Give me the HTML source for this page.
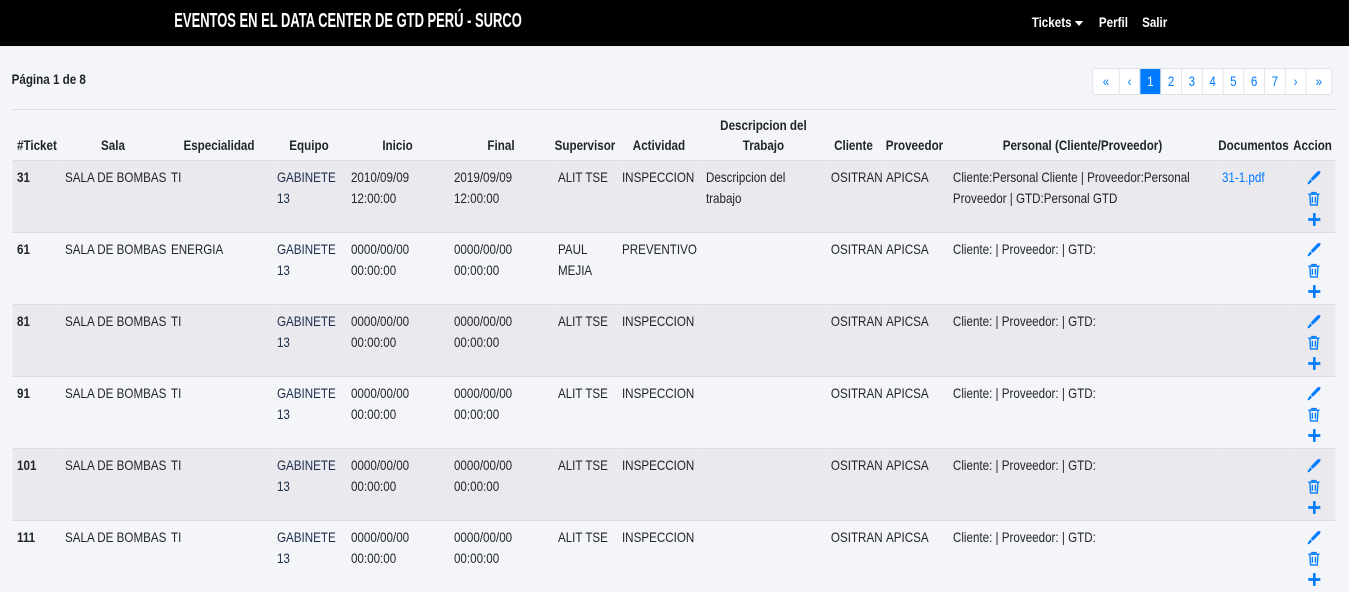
<!DOCTYPE html>
<html><head><meta charset="utf-8"><style>
*{box-sizing:border-box;margin:0;padding:0}
body{width:1349px;height:591px;overflow:hidden;background:#f4f5f9;font-family:"Liberation Sans",sans-serif;font-size:14px;color:#212529}
.w{position:absolute;left:0;top:0;width:1626px;height:591px;transform:scaleX(0.83);transform-origin:0 0}
.nav{height:46px;background:#000;color:#fff;position:relative}
.nav .t{position:absolute;left:210px;top:10px;font-size:20px;font-weight:bold;transform:scaleX(0.78);transform-origin:0 0;white-space:nowrap}
.nav .l{position:absolute;top:14px;font-size:14px;font-weight:bold}
.pg{position:absolute;left:14px;top:71px;font-weight:bold;font-size:14px}
.pag{position:absolute;left:1316px;top:68px;display:flex;border:1px solid #dee2e6;border-radius:3px;background:#fff;height:27px}
.pag span{display:block;height:25px;line-height:25px;text-align:center;color:#007bff;border-left:1px solid #dee2e6;font-size:14px}
.pag span:first-child{border-left:0}
.pag .a{background:#007bff;color:#fff}
.hr{position:absolute;left:14.5px;top:109px;width:1594px;border-top:1px solid #dcdde2}
table{position:absolute;left:14.5px;top:112px;width:1594px;border-collapse:collapse;table-layout:fixed}
th{font-weight:bold;text-align:center;vertical-align:bottom;padding:0 1px 5px;line-height:20px;height:48px;font-size:14px}
td{vertical-align:top;padding:6px 6px 0;line-height:21px;height:72px;border-top:1px solid #dcdde2}
td.s{white-space:nowrap;padding-right:0}
tr.o td{background:#e9e9ee}
td.b{font-weight:bold}
.eq{color:#1c2d4a}
a{color:#007bff;text-decoration:none}
.ic{text-align:center;padding-left:10px}
.ic div{height:21px;display:flex;justify-content:center;align-items:center}
</style></head><body><div class="w">
<div class="nav"><div class="t">EVENTOS EN EL DATA CENTER DE GTD PERÚ - SURCO</div>
<div class="l" style="left:1243px">Tickets <span style="display:inline-block;border-left:5px solid transparent;border-right:5px solid transparent;border-top:5px solid #fff;vertical-align:middle"></span></div>
<div class="l" style="left:1324px">Perfil</div><div class="l" style="left:1376px">Salir</div></div>
<div class="pg">Página 1 de 8</div>
<div class="pag"><span style="width:31px">«</span><span style="width:25px">‹</span><span class="a" style="width:25px">1</span><span style="width:25px">2</span><span style="width:25px">3</span><span style="width:25px">4</span><span style="width:25px">5</span><span style="width:25px">6</span><span style="width:25px">7</span><span style="width:25px">›</span><span style="width:31px">»</span></div>
<div class="hr"></div>
<table>
<colgroup><col style="width:57.8px"><col style="width:127.7px"><col style="width:127.7px"><col style="width:89.2px"><col style="width:124.1px"><col style="width:125.3px"><col style="width:77.1px"><col style="width:101.2px"><col style="width:150.6px"><col style="width:66.3px"><col style="width:80.7px"><col style="width:324.1px"><col style="width:88px"><col style="width:54.2px"></colgroup>
<tr><th style="text-align:left;padding-left:6px">#Ticket</th><th>Sala</th><th>Especialidad</th><th>Equipo</th><th>Inicio</th><th>Final</th><th>Supervisor</th><th>Actividad</th><th>Descripcion del Trabajo</th><th>Cliente</th><th>Proveedor</th><th>Personal (Cliente/Proveedor)</th><th>Documentos</th><th>Accion</th></tr>
<tr class="o"><td class="b">31</td><td class="s">SALA DE BOMBAS</td><td>TI</td><td class="eq">GABINETE 13</td><td>2010/09/09 12:00:00</td><td>2019/09/09 12:00:00</td><td>ALIT TSE</td><td>INSPECCION</td><td>Descripcion del trabajo</td><td>OSITRAN</td><td>APICSA</td><td>Cliente:Personal Cliente | Proveedor:Personal Proveedor | GTD:Personal GTD</td><td><a>31-1.pdf</a></td><td class="ic">ICONS</td></tr>
<tr><td class="b">61</td><td class="s">SALA DE BOMBAS</td><td>ENERGIA</td><td class="eq">GABINETE 13</td><td>0000/00/00 00:00:00</td><td>0000/00/00 00:00:00</td><td>PAUL MEJIA</td><td>PREVENTIVO</td><td></td><td>OSITRAN</td><td>APICSA</td><td>Cliente: | Proveedor: | GTD:</td><td></td><td class="ic">ICONS</td></tr>
<tr class="o"><td class="b">81</td><td class="s">SALA DE BOMBAS</td><td>TI</td><td class="eq">GABINETE 13</td><td>0000/00/00 00:00:00</td><td>0000/00/00 00:00:00</td><td>ALIT TSE</td><td>INSPECCION</td><td></td><td>OSITRAN</td><td>APICSA</td><td>Cliente: | Proveedor: | GTD:</td><td></td><td class="ic">ICONS</td></tr>
<tr><td class="b">91</td><td class="s">SALA DE BOMBAS</td><td>TI</td><td class="eq">GABINETE 13</td><td>0000/00/00 00:00:00</td><td>0000/00/00 00:00:00</td><td>ALIT TSE</td><td>INSPECCION</td><td></td><td>OSITRAN</td><td>APICSA</td><td>Cliente: | Proveedor: | GTD:</td><td></td><td class="ic">ICONS</td></tr>
<tr class="o"><td class="b">101</td><td class="s">SALA DE BOMBAS</td><td>TI</td><td class="eq">GABINETE 13</td><td>0000/00/00 00:00:00</td><td>0000/00/00 00:00:00</td><td>ALIT TSE</td><td>INSPECCION</td><td></td><td>OSITRAN</td><td>APICSA</td><td>Cliente: | Proveedor: | GTD:</td><td></td><td class="ic">ICONS</td></tr>
<tr><td class="b">111</td><td class="s">SALA DE BOMBAS</td><td>TI</td><td class="eq">GABINETE 13</td><td>0000/00/00 00:00:00</td><td>0000/00/00 00:00:00</td><td>ALIT TSE</td><td>INSPECCION</td><td></td><td>OSITRAN</td><td>APICSA</td><td>Cliente: | Proveedor: | GTD:</td><td></td><td class="ic">ICONS</td></tr>
</table>
</div>
<script>
var ic='<div><svg width="18" height="15" viewBox="0 0 14 14" preserveAspectRatio="none"><path d="M13 1.5c-1-1-2-.6-3 .3L4 8l2 2 6.2-6c.9-1 1.3-2 .8-2.5z" fill="#007bff"/><path d="M3.5 8.7l1.8 1.8L2 13.5 1 12.5z" fill="#007bff"/></svg></div><div><svg width="16" height="15" viewBox="0 0 13 14" preserveAspectRatio="none" fill="none" stroke="#007bff" stroke-width="1.3"><path d="M1 3h11M4.5 3V1.5h4V3M2.5 3l.7 10h6.6l.7-10M5 5.5v5.5M8 5.5v5.5"/></svg></div><div><svg width="17" height="15" viewBox="0 0 14 14" preserveAspectRatio="none"><path d="M7 1v12M1 7h12" stroke="#007bff" stroke-width="2.6"/></svg></div>';
document.querySelectorAll('.ic').forEach(function(e){e.innerHTML=ic});
</script>
</body></html>
